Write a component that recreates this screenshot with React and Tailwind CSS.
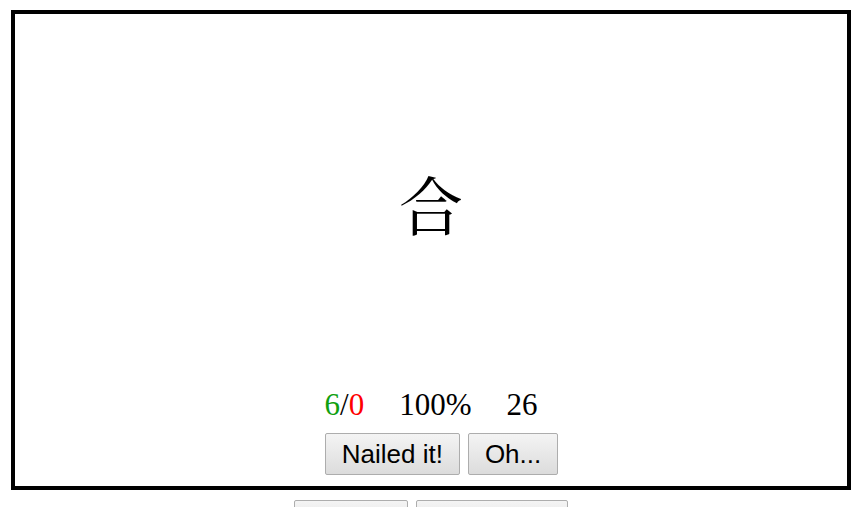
export default function App() {
  const btn =
    "rounded-[2px] border border-[#adadad] bg-gradient-to-b from-[#f4f4f4] to-[#dcdcdc] px-4 py-[5px] text-[26px] leading-[30px] text-black font-['Liberation_Sans',Arial,sans-serif]"

  return (
    <div className="h-[507px] overflow-hidden bg-white">
      <div className="ml-[11px] mt-[10px] flex h-[480px] w-[840px] flex-col border-4 border-black">
        <div className="flex flex-1 items-center justify-center">
          <span className="pt-[2px] text-[64px] leading-none text-black font-['Noto_Serif_CJK_SC','Noto_Sans_CJK_SC',serif]">合</span>
        </div>
        <div className="flex justify-center gap-[35px] text-[31px] leading-[34px] text-black font-['Liberation_Serif','Times_New_Roman',serif]">
          <span>
            <span className="text-[#10a010]">6</span>
            <span>/</span>
            <span className="text-[#ff0000]">0</span>
          </span>
          <span>100%</span>
          <span>26</span>
        </div>
        <div className="mb-[11px] mt-[11px] flex justify-center gap-2 pl-[21px]">
          <button className={btn}>Nailed it!</button>
          <button className={btn}>Oh...</button>
        </div>
      </div>
      <div className="mt-[10px] flex justify-center gap-2 pl-[3px]">
        <button className={btn + " w-[114px]"}>&nbsp;</button>
        <button className={btn + " w-[152px]"}>&nbsp;</button>
      </div>
    </div>
  )
}
